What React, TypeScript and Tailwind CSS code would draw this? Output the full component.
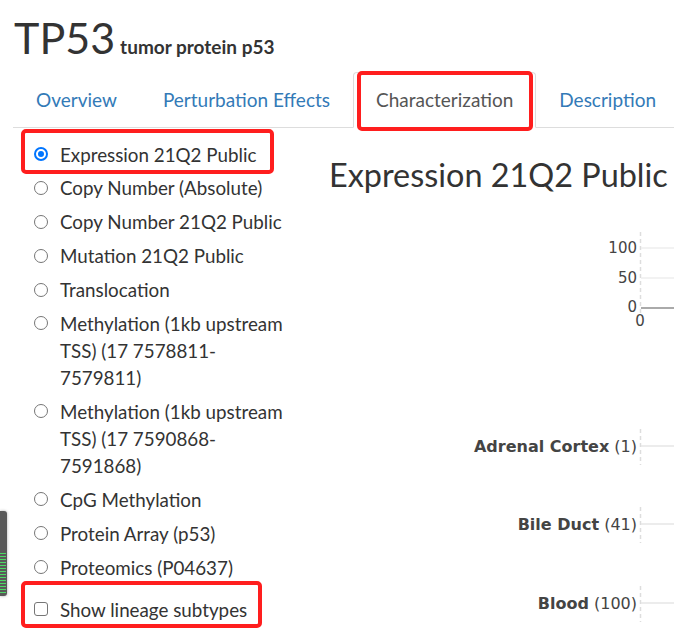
import React from "react";

const tabs = [
  { label: "Overview", active: false },
  { label: "Perturbation Effects", active: false },
  { label: "Characterization", active: true },
  { label: "Description", active: false },
];

const datasets = [
  "Expression 21Q2 Public",
  "Copy Number (Absolute)",
  "Copy Number 21Q2 Public",
  "Mutation 21Q2 Public",
  "Translocation",
  "Methylation (1kb upstream TSS) (17 7578811-7579811)",
  "Methylation (1kb upstream TSS) (17 7590868-7591868)",
  "CpG Methylation",
  "Protein Array (p53)",
  "Proteomics (P04637)",
];

const lineages = [
  { name: "Adrenal Cortex", n: 1, y: 249 },
  { name: "Bile Duct", n: 41, y: 327 },
  { name: "Blood", n: 100, y: 406 },
];

function Radio({ checked }: { checked?: boolean }) {
  return checked ? (
    <span className="mt-[6.5px] w-[14px] h-[14px] shrink-0 rounded-full border-[2px] border-[#0075ff] bg-white flex items-center justify-center">
      <span className="w-[6px] h-[6px] rounded-full bg-[#0075ff]" />
    </span>
  ) : (
    <span className="mt-[6.5px] w-[14px] h-[14px] shrink-0 rounded-full border border-[#767676] bg-white" />
  );
}

function Chart() {
  const axisFont = { fontFamily: "'DejaVu Sans', Verdana, sans-serif" };
  return (
    <svg width={345} height={440} className="block mt-[3px]" style={axisFont}>
      {/* expression histogram axis */}
      <line x1={311.5} y1={35} x2={311.5} y2={116} stroke="#ddd" strokeWidth={1.5} strokeDasharray="4 3" />
      <line x1={312} y1={51} x2={345} y2={51} stroke="#eee" strokeWidth={1.5} />
      <line x1={312} y1={81} x2={345} y2={81} stroke="#eee" strokeWidth={1.5} />
      <line x1={312} y1={111} x2={345} y2={111} stroke="#aaa" strokeWidth={2} />
      <text x={308} y={51} textAnchor="end" dominantBaseline="central" fontSize={15} fill="#444">100</text>
      <text x={308} y={81} textAnchor="end" dominantBaseline="central" fontSize={15} fill="#444">50</text>
      <text x={308} y={110} textAnchor="end" dominantBaseline="central" fontSize={15} fill="#444">0</text>
      <text x={311} y={124} textAnchor="middle" dominantBaseline="central" fontSize={15} fill="#444">0</text>

      {/* lineage rows */}
      {lineages.map((l) => (
        <g key={l.name}>
          <line x1={311.5} y1={l.y - 17} x2={311.5} y2={l.y + 19} stroke="#ddd" strokeWidth={1.5} strokeDasharray="4 3" />
          <line x1={312} y1={l.y} x2={345} y2={l.y} stroke="#e6e6e6" strokeWidth={1.5} />
          <text x={308} y={l.y} textAnchor="end" dominantBaseline="central" fontSize={16} fill="#444">
            <tspan fontWeight="bold">{l.name}</tspan> ({l.n})
          </text>
        </g>
      ))}
    </svg>
  );
}

export default function App() {
  return (
    <div className="relative w-[674px] h-[633px] overflow-hidden bg-white text-[#333] font-['Lato','Noto_Sans',sans-serif]">
      {/* Header */}
      <div className="flex items-baseline pl-[14px] pt-[16px]">
        <h1 className="text-[43px] leading-[43px] font-normal">TP53</h1>
        <span className="ml-[5px] text-[19px] font-bold">tumor protein p53</span>
      </div>

      {/* Tabs */}
      <ul className="flex ml-[13px] mt-[10px] border-b border-[#ddd]">
        {tabs.map((t) => (
          <li key={t.label} className="-mb-px">
            <a
              className={`block px-[22px] pt-[14px] pb-[15px] text-[19px] leading-[25px] whitespace-nowrap border rounded-t ${
                t.active
                  ? "border-[#ddd] border-b-white bg-white text-[#555]"
                  : "border-transparent text-[#337ab7]"
              }`}
            >
              {t.label}
            </a>
          </li>
        ))}
      </ul>

      {/* Body */}
      <div className="flex">
        <div className="w-[329px] shrink-0 pl-[34px] pt-[13px]">
          <div className="flex flex-col gap-[6.9px]">
            {datasets.map((d, i) => (
              <label key={d} className="flex items-start gap-[12px] text-[18.8px] leading-[27px]">
                <Radio checked={i === 0} />
                <span className="w-[232px]">{d}</span>
              </label>
            ))}
          </div>
          <label className="flex items-start gap-[12px] mt-[15px] text-[18.8px] leading-[27px]">
            <span className="mt-[6.5px] w-[14px] h-[14px] shrink-0 rounded-[3px] border border-[#767676] bg-white" />
            <span>Show lineage subtypes</span>
          </label>
        </div>

        <div className="flex-1 min-w-0 pt-[28px]">
          <h2 className="h-[38px] text-[32.4px] leading-[38px] font-normal whitespace-nowrap">Expression 21Q2 Public</h2>
          <Chart />
        </div>
      </div>

      {/* Left-edge widget */}
      <div className="absolute left-0 top-[511px] w-[7px] h-[85px] rounded-r-[3px] bg-[#595959] shadow-[0_0_3px_rgba(0,0,0,0.35)] overflow-hidden flex flex-col justify-end pb-[1px]">
        <div className="h-[42px] bg-[repeating-linear-gradient(to_bottom,#4cd964_0px,#4cd964_1px,transparent_1px,transparent_3px)] mr-[1px]" />
      </div>

      {/* Red annotation boxes */}
      <div className="absolute left-[21px] top-[129px] w-[253px] h-[45px] border-[4px] border-[#ff1e1e] rounded-[5px]" />
      <div className="absolute left-[357px] top-[71px] w-[176px] h-[60px] border-[4px] border-[#ff1e1e] rounded-[5px]" />
      <div className="absolute left-[21px] top-[581px] w-[241px] h-[47px] border-[4px] border-[#ff1e1e] rounded-[5px]" />
    </div>
  );
}
